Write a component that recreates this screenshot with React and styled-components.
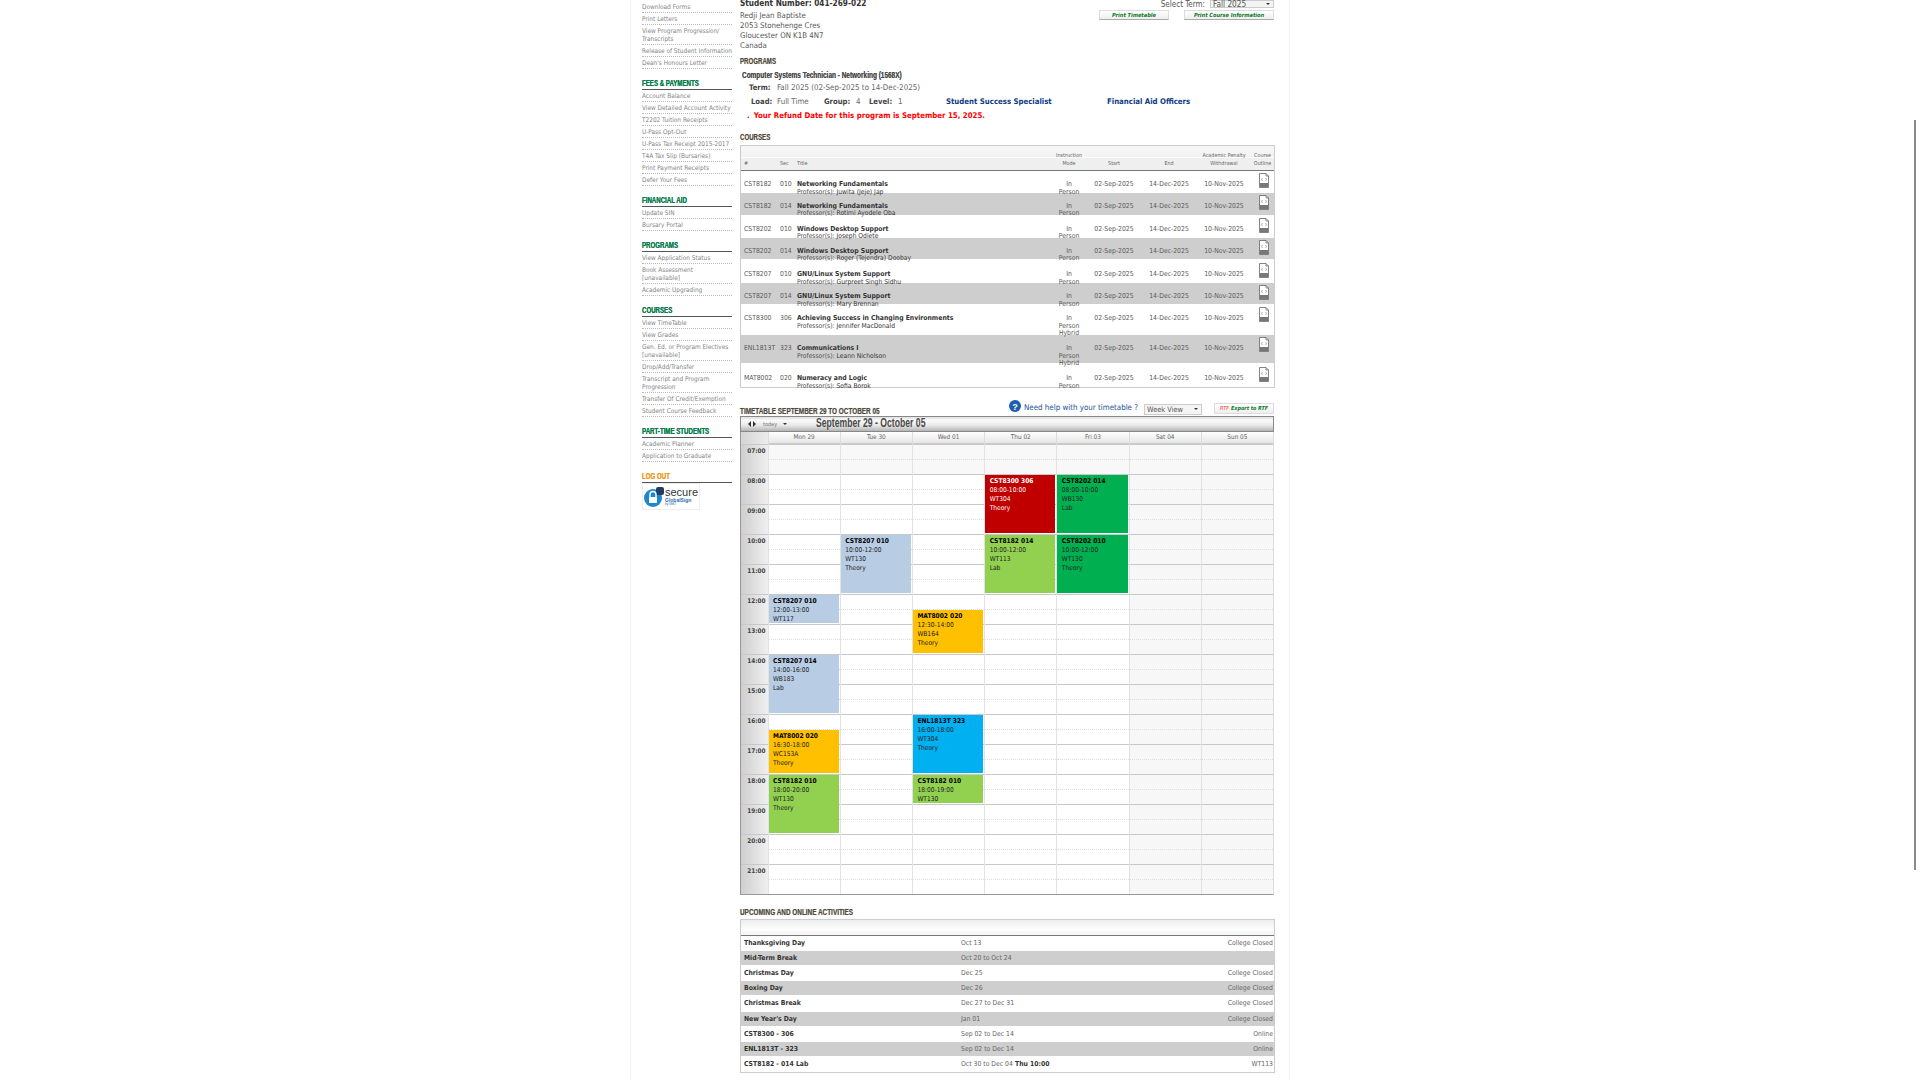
import React from 'react';
import styled, { createGlobalStyle } from 'styled-components';

const GlobalStyle = createGlobalStyle`
  html, body {
    margin: 0;
    height: 100%;
    overflow: hidden;
    background: #fff;
  }
  * { box-sizing: border-box; }
`;

const bodyFont = `'DejaVu Sans Condensed', 'DejaVu Sans', 'Open Sans', sans-serif`;
const headFont = `'Liberation Sans', Arial, sans-serif`;

const Page = styled.div`
  width: 660px;
  height: 1090px;
  margin: -2px 0 0 630px;
  padding: 0 15px 0 12px;
  display: flex;
  border-left: 1px solid #f3f3f3;
  border-right: 1px solid #f3f3f3;
  font-family: ${bodyFont};
  color: #444;
`;

const Scrollbar = styled.div`
  position: absolute;
  top: 120px;
  right: 4px;
  width: 2px;
  height: 750px;
  background: #8a8a8a;
`;

/* the site's heading face is very narrow, so squeeze a regular bold */
const Narrow = styled.span`
  display: inline-block;
  transform: scaleX(${(p) => p.$x || 0.68});
  transform-origin: left center;
  white-space: nowrap;
`;

/* left menu */
const Sidebar = styled.nav`
  width: 90px;
  flex: none;
  padding-top: 3px;
  margin-left: -1px;
`;

const MenuHeading = styled.div`
  height: 11px;
  margin-top: 10px;
  border-bottom: 1px solid #555;
  font: bold 9px/9px ${headFont};
  color: ${(p) => p.$color || '#0b7d4c'};
  text-shadow: 0 0 0.5px ${(p) => p.$color || '#0b7d4c'};
`;

const MenuItem = styled.a`
  display: block;
  padding: 2px 0 1px;
  border-bottom: 1px dotted #bbb;
  font-size: 6.45px;
  line-height: 8px;
  color: #858585;
  white-space: pre-line;
`;

const SealBox = styled.div`
  width: 58px;
  height: 27px;
  border: 1px solid #eee;
  display: flex;
  align-items: center;
  gap: 1px;
  padding-left: 1px;
`;

const SealText = styled.div`
  display: flex;
  flex-direction: column;
  font-family: 'Liberation Sans', sans-serif;
  line-height: 1;
  color: #333;
  font-size: 11px;

  b { color: #2a6db5; font-size: 5px; margin-top: 0; }
  i { color: #2a6db5; font-size: 3px; font-style: normal; }
`;

/* main column */
const Main = styled.main`
  width: 535px;
  flex: none;
  margin-left: 8px;
`;

const TopRow = styled.div`
  display: flex;
  justify-content: space-between;
`;

const StudentNumber = styled.div`
  margin-bottom: 2.5px;
  font-size: 8.2px;
  font-weight: bold;
  line-height: 10px;
  color: #333;
`;

const AddressLine = styled.div`
  font-size: 7.8px;
  line-height: 10px;
  color: #555;
`;

const TopActions = styled.div`
  width: 175px;
  margin-right: 1px;
  padding-top: 2px;
`;

const TermRow = styled.div`
  display: flex;
  justify-content: flex-end;
  align-items: center;
  gap: 5px;
  height: 8px;
  font-size: 8px;
  color: #555;
`;

const SelectBox = styled.div`
  position: relative;
  width: ${(p) => p.$w}px;
  height: ${(p) => p.$h}px;
  border: 1px solid #ccc;
  background: #f4f4f4;
  padding-left: 2px;
  font-size: ${(p) => p.$fs}px;
  line-height: ${(p) => p.$h - 2}px;
  color: #555;

  &::after {
    content: '';
    position: absolute;
    right: 3px;
    top: 50%;
    margin-top: -1px;
    border: 2px solid transparent;
    border-top: 2px solid #333;
    border-bottom: none;
  }
`;

const ButtonRow = styled.div`
  display: flex;
  justify-content: flex-end;
  gap: 15px;
  margin-top: 2px;
`;

const PrintButton = styled.div`
  width: ${(p) => p.$w}px;
  height: 10px;
  background: linear-gradient(#fff, #eee);
  border: 1px solid #ddd;
  border-bottom-color: #aaa;
  text-align: center;
  font-size: 5.6px;
  font-weight: bold;
  font-style: italic;
  line-height: 8px;
  color: #0a7a2a;
`;

const SectionHeading = styled.div`
  height: 10px;
  margin-top: ${(p) => p.$mt}px;
  font: bold 9px/10px ${headFont};
  color: #4a4a4a;
  text-shadow: 0 0 1px #b9a27a;
`;

const ProgramTitle = styled.div`
  margin: 3.5px 0 0 2px;
  height: 10px;
  font: bold 9.5px/10px ${headFont};
  color: #4c4c4c;
  text-shadow: 0 0 0.5px #6b6b6b;
`;

const InfoRow = styled.div`
  display: flex;
  height: 10px;
  margin-top: ${(p) => p.$mt}px;
  font-size: 7.9px;
  line-height: 10px;
  color: #666;
  white-space: nowrap;
`;

const InfoLabel = styled.b`
  width: ${(p) => p.$w}px;
  margin-left: ${(p) => p.$ml || 0}px;
  flex: none;
  font-size: 7.6px;
  color: #444;
`;

const InfoValue = styled.span`
  width: ${(p) => p.$w}px;
  flex: none;
`;

const LinkText = styled.b`
  width: ${(p) => p.$w}px;
  flex: none;
  font-size: 7.75px;
  color: #0c3b86;
`;

const RefundNote = styled.div`
  height: 10px;
  margin: 4px 0 0 7px;
  font-size: 7.8px;
  font-weight: bold;
  line-height: 10px;
  color: #f00;

  span { margin-right: 4px; }
`;

/* courses */
const DataTable = styled.div`
  margin-top: ${(p) => p.$mt}px;
  border: 1px solid #ccc;
`;

const courseCols = '39px 17px 254px 36px 54px 56px 54px 23px';

const HeadRow = styled.div`
  display: grid;
  grid-template-columns: ${courseCols};
  height: 25px;
  padding-top: 5px;
  background: linear-gradient(#f7f7f7 0, #f2f2f2 11px, #fff 11px, #fff 12px, #efefef 12px);
  border-bottom: 1px solid #777;
  font-size: 5.4px;
  line-height: 8px;
  color: #666;
`;

const HeadCell = styled.div`
  text-align: ${(p) => p.$left ? 'left' : 'center'};
  padding-left: ${(p) => p.$pad || 0}px;
  padding-top: ${(p) => p.$single ? 8 : 0}px;
  white-space: nowrap;
`;

const CourseRowBox = styled.div`
  display: grid;
  grid-template-columns: ${courseCols};
  align-items: start;
  height: ${(p) => p.$h}px;
  padding-top: ${(p) => p.$pad}px;
  background: ${(p) => p.$shade ? '#cecece' : '#fff'};
  font-size: 6.8px;
  line-height: 7.5px;
  color: #5a5a5a;
`;

const CourseCode = styled.div`
  padding-left: 3px;
  white-space: nowrap;
`;

const CourseName = styled.div`
  font-size: 6.8px;
  font-weight: bold;
  color: #333;
  white-space: nowrap;

  div { font-size: 6.7px; font-weight: normal; color: #555; }
  span { color: #333; }
`;

const MidCell = styled.div`
  text-align: center;
  white-space: nowrap;
`;

const OutlineIcon = styled.svg`
  display: block;
  width: 12px;
  height: 15px;
  margin: -8px 0 0 7px;
`;

/* timetable */
const TimetableBar = styled.div`
  display: flex;
  align-items: flex-start;
  height: 13px;
  margin-top: 15px;
  padding-top: 1px;
`;

const TimetableTitle = styled.div`
  font: bold 9px/10px ${headFont};
  color: #4a4a4a;
  text-shadow: 0 0 1px #b9a27a;
  flex: 1;
  margin-top: 2px;
`;

const HelpIcon = styled.svg`
  width: 12px;
  height: 12px;
  margin-top: -4px;
`;

const HelpText = styled.span`
  margin: -1px 6px 0 3px;
  font-size: 7.9px;
  line-height: 10px;
  color: #22559c;
  white-space: nowrap;
`;

const ExportButton = styled.div`
  display: flex;
  align-items: center;
  justify-content: center;
  gap: 2px;
  width: 60px;
  height: 11px;
  margin: -1px 1px 0 12px;
  background: linear-gradient(#fff, #eee);
  border: 1px solid #ddd;
  font-size: 5.4px;
  font-style: italic;
  font-weight: bold;
  color: #0a7a2a;

  i { color: #e33; font-weight: normal; }
`;

const Calendar = styled.div`
  width: 534px;
  border-left: 1px solid #999;
  border-right: 1px solid #ddd;
  border-bottom: 1px solid #999;
`;

const CalToolbar = styled.div`
  display: flex;
  align-items: center;
  height: 16.5px;
  margin: 0 -1px 0 -1px;
  padding-left: 7px;
  border: 1px solid #888;
  background: linear-gradient(#e2e2e2, #fafafa 25%, #e8e8e8 60%, #b4b4b4);
`;

const NavArrow = styled.span`
  width: 0;
  height: 0;
  margin-right: 2px;
  border: 3px solid transparent;
  border-left: ${(p) => p.$right ? '3px solid #333' : 'none'};
  border-right: ${(p) => p.$right ? 'none' : '3px solid #333'};
`;

const TodayText = styled.span`
  margin-left: 5px;
  font-size: 5.5px;
  color: #777;
`;

const TodayCaret = styled.span`
  margin-left: 6px;
  border: 2px solid transparent;
  border-top: 2px solid #333;
  border-bottom: none;
`;

const CalTitle = styled.div`
  margin-left: 29px;
  font: bold 12px/15px ${headFont};
  color: #4a4a4a;
`;

const CalGrid = styled.div`
  display: grid;
  grid-template-columns: 26.5px repeat(7, 1fr);
`;

const DayHead = styled.div`
  height: 11.5px;
  background: linear-gradient(#fff, #e6e6e6);
  border-left: 1px solid #ddd;
  border-bottom: 1px solid #ccc;
  text-align: center;
  font-size: 6.4px;
  line-height: 11px;
  color: #666;
`;

const CornerHead = styled.div`
  height: 11.5px;
  background: linear-gradient(90deg, #d4d4d4, #ececec);
`;

const TimeCol = styled.div`
  background: linear-gradient(90deg, #cfcfcf, #efefef);
`;

const TimeSlot = styled.div`
  height: 30px;
  padding: 2px 2px 0 0;
  border-top: 1px solid #c8c8cc;
  text-align: right;
  font-size: 6.4px;
  font-weight: bold;
  line-height: 8px;
  color: #444;
`;

const DayCol = styled.div`
  position: relative;
  border-left: 1px solid #e2e2e2;
  background: ${(p) => p.$weekend ? '#f7f7f7' : '#fff'};
`;

const HourCell = styled.div`
  height: 30px;
  border-top: 1px solid #c8c8cc;
  background: ${(p) => p.$muted ? '#f8f8f8' : 'transparent'};
  position: relative;

  &::after {
    content: '';
    position: absolute;
    left: 0;
    right: 0;
    top: 14px;
    border-top: 1px dotted #ddd;
  }
`;

const EventBlock = styled.div`
  position: absolute;
  z-index: 1;
  left: 0;
  right: 1px;
  overflow: hidden;
  padding: 2px 0 0 4.5px;
  background: ${(p) => p.$bg};
  color: ${(p) => p.$light ? '#fff' : '#222'};
  font-size: 6.6px;
  line-height: 9px;

  b { display: block; color: ${(p) => p.$light ? '#fff' : '#000'}; }
`;

/* activities */
const ActivityHead = styled.div`
  height: 16px;
  background: linear-gradient(#eee, #fff 75%, #f7f7f7 75%);
  border-bottom: 1px solid #777;
`;

const ActivityRow = styled.div`
  display: grid;
  grid-template-columns: 217px 1fr auto;
  align-items: center;
  height: ${(p) => p.$h}px;
  padding: 0 1px 0 3px;
  background: ${(p) => p.$shade ? '#cecece' : '#fff'};
  font-size: 6.8px;
  color: #666;

  b { color: #333; }
`;

const ActivityName = styled.b`
  font-size: 6.8px;
`;

const colors = {
  red: '#c00000',
  green: '#00b050',
  lime: '#92d050',
  blue: '#b8cce4',
  amber: '#ffc000',
  cyan: '#00b0f0',
};

const menu = [
  { items: ['Download Forms', 'Print Letters', 'View Program Progression/\nTranscripts', 'Release of Student Information', "Dean's Honours Letter"] },
  { title: 'FEES & PAYMENTS', items: ['Account Balance', 'View Detailed Account Activity', 'T2202 Tuition Receipts', 'U-Pass Opt-Out', 'U-Pass Tax Receipt 2015-2017', 'T4A Tax Slip (Bursaries)', 'Print Payment Receipts', 'Defer Your Fees'] },
  { title: 'FINANCIAL AID', items: ['Update SIN', 'Bursary Portal'] },
  { title: 'PROGRAMS', items: ['View Application Status', 'Book Assessment\n[unavailable]', 'Academic Upgrading'] },
  { title: 'COURSES', items: ['View TimeTable', 'View Grades', 'Gen. Ed. or Program Electives\n[unavailable]', 'Drop/Add/Transfer', 'Transcript and Program\nProgression', 'Transfer Of Credit/Exemption', 'Student Course Feedback'] },
  { title: 'PART-TIME STUDENTS', items: ['Academic Planner', 'Application to Graduate'] },
];

const courses = [
  { code: 'CST8182', sec: '010', name: 'Networking Fundamentals', prof: 'Juwita (Jeje) Jap', mode: ['In', 'Person'], h: 22, pad: 10.75 },
  { code: 'CST8182', sec: '014', name: 'Networking Fundamentals', prof: 'Rotimi Ayodele Oba', mode: ['In', 'Person'], h: 22, pad: 10.25 },
  { code: 'CST8202', sec: '010', name: 'Windows Desktop Support', prof: 'Joseph Odiete', mode: ['In', 'Person'], h: 23, pad: 11.25 },
  { code: 'CST8202', sec: '014', name: 'Windows Desktop Support', prof: 'Roger (Tejendra) Doobay', mode: ['In', 'Person'], h: 21, pad: 10.25 },
  { code: 'CST8207', sec: '010', name: 'GNU/Linux System Support', prof: 'Gurpreet Singh Sidhu', mode: ['In', 'Person'], h: 24, pad: 12.75 },
  { code: 'CST8207', sec: '014', name: 'GNU/Linux System Support', prof: 'Mary Brennan', mode: ['In', 'Person'], h: 21, pad: 10.75 },
  { code: 'CST8300', sec: '306', name: 'Achieving Success in Changing Environments', prof: 'Jennifer MacDonald', mode: ['In', 'Person', 'Hybrid'], h: 31, pad: 11.75 },
  { code: 'ENL1813T', sec: '323', name: 'Communications I', prof: 'Leann Nicholson', mode: ['In', 'Person', 'Hybrid'], h: 28, pad: 10.75 },
  { code: 'MAT8002', sec: '020', name: 'Numeracy and Logic', prof: 'Sofia Borok', mode: ['In', 'Person'], h: 24, pad: 12.75 },
];

const days = ['Mon 29', 'Tue 30', 'Wed 01', 'Thu 02', 'Fri 03', 'Sat 04', 'Sun 05'];
const hours = ['07:00', '08:00', '09:00', '10:00', '11:00', '12:00', '13:00', '14:00', '15:00', '16:00', '17:00', '18:00', '19:00', '20:00', '21:00'];

const events = [
  { day: 0, start: 12, end: 13, bg: 'blue', lines: ['CST8207 010', '12:00-13:00', 'WT117'] },
  { day: 0, start: 14, end: 16, bg: 'blue', lines: ['CST8207 014', '14:00-16:00', 'WB183', 'Lab'] },
  { day: 0, start: 16.5, end: 18, bg: 'amber', lines: ['MAT8002 020', '16:30-18:00', 'WC153A', 'Theory'] },
  { day: 0, start: 18, end: 20, bg: 'lime', lines: ['CST8182 010', '18:00-20:00', 'WT130', 'Theory'] },
  { day: 1, start: 10, end: 12, bg: 'blue', lines: ['CST8207 010', '10:00-12:00', 'WT130', 'Theory'] },
  { day: 2, start: 12.5, end: 14, bg: 'amber', lines: ['MAT8002 020', '12:30-14:00', 'WB164', 'Theory'] },
  { day: 2, start: 16, end: 18, bg: 'cyan', lines: ['ENL1813T 323', '16:00-18:00', 'WT304', 'Theory'] },
  { day: 2, start: 18, end: 19, bg: 'lime', lines: ['CST8182 010', '18:00-19:00', 'WT130'] },
  { day: 3, start: 8, end: 10, bg: 'red', light: true, lines: ['CST8300 306', '08:00-10:00', 'WT304', 'Theory'] },
  { day: 3, start: 10, end: 12, bg: 'lime', lines: ['CST8182 014', '10:00-12:00', 'WT113', 'Lab'] },
  { day: 4, start: 8, end: 10, bg: 'green', lines: ['CST8202 014', '08:00-10:00', 'WB130', 'Lab'] },
  { day: 4, start: 10, end: 12, bg: 'green', lines: ['CST8202 010', '10:00-12:00', 'WT130', 'Theory'] },
];

const activities = [
  { name: 'Thanksgiving Day', date: 'Oct 13', note: 'College Closed', h: 15 },
  { name: 'Mid-Term Break', date: 'Oct 20 to Oct 24', note: '', h: 14 },
  { name: 'Christmas Day', date: 'Dec 25', note: 'College Closed', h: 16 },
  { name: 'Boxing Day', date: 'Dec 26', note: 'College Closed', h: 14 },
  { name: 'Christmas Break', date: 'Dec 27 to Dec 31', note: 'College Closed', h: 17 },
  { name: "New Year's Day", date: 'Jan 01', note: 'College Closed', h: 14 },
  { name: 'CST8300 - 306', date: 'Sep 02 to Dec 14', note: 'Online', h: 16 },
  { name: 'ENL1813T - 323', date: 'Sep 02 to Dec 14', note: 'Online', h: 14 },
  { name: 'CST8182 - 014 Lab', date: 'Oct 30 to Dec 04', extra: 'Thu 10:00', note: 'WT113', h: 16 },
];

const FileIcon = () => (
  <OutlineIcon viewBox="0 0 12 15">
    <path d="M1.5 .5h6.5l2.5 2.5v11.5h-9z" fill="#fff" stroke="#666" strokeWidth="0.8" />
    <path d="M8 .5v2.5h2.5" fill="none" stroke="#666" strokeWidth="0.7" />
    <rect x="2" y="10" width="8" height="4" fill="#777" />
    <path d="M4.5 5l-1 1.5 1 1.5M7.5 5l1 1.5-1 1.5" fill="none" stroke="#888" strokeWidth="0.7" />
  </OutlineIcon>
);

const SealLogo = () => (
  <SealBox>
    <svg width="20" height="20" viewBox="0 0 20 20">
      <circle cx="9" cy="11" r="9" fill="#1d87c9" />
      <rect x="12" y="0" width="8" height="8" rx="2" fill="#1f3f66" />
      <path d="M6 10V7.5a3 3 0 0 1 6 0V10" fill="none" stroke="#fff" strokeWidth="1.4" />
      <rect x="5" y="10" width="8" height="6" rx="0.5" fill="#fff" />
    </svg>
    <SealText>
      secure
      <b>GlobalSign</b>
      <i>by GMO</i>
    </SealText>
  </SealBox>
);

const App = () => (
  <>
    <GlobalStyle />
    <Page>
      <Sidebar>
        {menu.map((group, i) => (
          <div key={i}>
            {group.title && <MenuHeading><Narrow>{group.title}</Narrow></MenuHeading>}
            {group.items.map((item) => (
              <MenuItem key={item}>{item}</MenuItem>
            ))}
          </div>
        ))}
        <MenuHeading $color="#f39a1f"><Narrow>LOG OUT</Narrow></MenuHeading>
        <SealLogo />
      </Sidebar>

      <Main>
        <TopRow>
          <div>
            <StudentNumber>Student Number: 041-269-022</StudentNumber>
            <AddressLine>Redji Jean Baptiste</AddressLine>
            <AddressLine>2053 Stonehenge Cres</AddressLine>
            <AddressLine>Gloucester ON K1B 4N7</AddressLine>
            <AddressLine>Canada</AddressLine>
          </div>
          <TopActions>
            <TermRow>
              Select Term:
              <SelectBox $w={64} $h={8} $fs={8.2}>Fall 2025</SelectBox>
            </TermRow>
            <ButtonRow>
              <PrintButton $w={70}>Print Timetable</PrintButton>
              <PrintButton $w={90}>Print Course Information</PrintButton>
            </ButtonRow>
          </TopActions>
        </TopRow>

        <SectionHeading $mt={5.5}><Narrow>PROGRAMS</Narrow></SectionHeading>
        <ProgramTitle><Narrow>Computer Systems Technician - Networking (1568X)</Narrow></ProgramTitle>
        <InfoRow $mt={3}>
          <InfoLabel $ml={9} $w={28}>Term:</InfoLabel>
          <InfoValue>Fall 2025 (02-Sep-2025 to 14-Dec-2025)</InfoValue>
        </InfoRow>
        <InfoRow $mt={4}>
          <InfoLabel $ml={11} $w={26}>Load:</InfoLabel>
          <InfoValue $w={47}>Full Time</InfoValue>
          <InfoLabel $w={32}>Group:</InfoLabel>
          <InfoValue $w={13}>4</InfoValue>
          <InfoLabel $w={29}>Level:</InfoLabel>
          <InfoValue $w={48}>1</InfoValue>
          <LinkText $w={161}>Student Success Specialist</LinkText>
          <LinkText>Financial Aid Officers</LinkText>
        </InfoRow>
        <RefundNote><span>.</span>Your Refund Date for this program is September 15, 2025.</RefundNote>

        <SectionHeading $mt={11}><Narrow>COURSES</Narrow></SectionHeading>
        <DataTable $mt={3}>
          <HeadRow>
            <HeadCell $left $pad={3} $single>#</HeadCell>
            <HeadCell $left $single>Sec</HeadCell>
            <HeadCell $left $single>Title</HeadCell>
            <HeadCell>Instruction<br />Mode</HeadCell>
            <HeadCell $single>Start</HeadCell>
            <HeadCell $single>End</HeadCell>
            <HeadCell>Academic Penalty<br />Withdrawal</HeadCell>
            <HeadCell>Course<br />Outline</HeadCell>
          </HeadRow>
          {courses.map((c, i) => (
            <CourseRowBox key={c.code + c.sec} $shade={i % 2 === 1} $h={c.h} $pad={c.pad}>
              <CourseCode>{c.code}</CourseCode>
              <div>{c.sec}</div>
              <CourseName>
                {c.name}
                <div>Professor(s): <span>{c.prof}</span></div>
              </CourseName>
              <MidCell>
                {c.mode.map((m) => <div key={m}>{m}</div>)}
              </MidCell>
              <MidCell>02-Sep-2025</MidCell>
              <MidCell>14-Dec-2025</MidCell>
              <MidCell>10-Nov-2025</MidCell>
              <FileIcon />
            </CourseRowBox>
          ))}
        </DataTable>

        <TimetableBar>
          <TimetableTitle><Narrow $x={0.71}>TIMETABLE SEPTEMBER 29 TO OCTOBER 05</Narrow></TimetableTitle>
          <HelpIcon viewBox="0 0 12 12">
            <circle cx="6" cy="6" r="6" fill="#1c5fb0" />
            <text x="6" y="9.5" textAnchor="middle" fontSize="9" fontWeight="bold" fontFamily="Liberation Sans" fill="#fff">?</text>
          </HelpIcon>
          <HelpText>Need help with your timetable ?</HelpText>
          <SelectBox $w={58} $h={11} $fs={7.4}>Week View</SelectBox>
          <ExportButton><i>RTF</i> Export to RTF</ExportButton>
        </TimetableBar>

        <Calendar>
          <CalToolbar>
            <NavArrow />
            <NavArrow $right />
            <TodayText>today</TodayText>
            <TodayCaret />
            <CalTitle><Narrow $x={0.72}>September 29 - October 05</Narrow></CalTitle>
          </CalToolbar>
          <CalGrid>
            <CornerHead />
            {days.map((d) => <DayHead key={d}>{d}</DayHead>)}
            <TimeCol>
              {hours.map((h) => <TimeSlot key={h}>{h}</TimeSlot>)}
            </TimeCol>
            {days.map((d, di) => (
              <DayCol key={d} $weekend={di > 4}>
                {hours.map((h, hi) => <HourCell key={h} $muted={hi === 0} />)}
                {events.filter((e) => e.day === di).map((e) => (
                  <EventBlock
                    key={e.start}
                    $bg={colors[e.bg]}
                    $light={e.light}
                    style={{ top: (e.start - 7) * 30 + 1.5, height: (e.end - e.start) * 30 - 2.5 }}
                  >
                    <b>{e.lines[0]}</b>
                    {e.lines.slice(1).map((l) => <div key={l}>{l}</div>)}
                  </EventBlock>
                ))}
              </DayCol>
            ))}
          </CalGrid>
        </Calendar>

        <SectionHeading $mt={12.5}><Narrow $x={0.71}>UPCOMING AND ONLINE ACTIVITIES</Narrow></SectionHeading>
        <DataTable $mt={1.5}>
          <ActivityHead />
          {activities.map((a, i) => (
            <ActivityRow key={a.name} $shade={i % 2 === 1} $h={a.h}>
              <ActivityName>{a.name}</ActivityName>
              <span>{a.date}{a.extra && <b> {a.extra}</b>}</span>
              <span>{a.note}</span>
            </ActivityRow>
          ))}
        </DataTable>
      </Main>
    </Page>
    <Scrollbar />
  </>
);

export default App;
